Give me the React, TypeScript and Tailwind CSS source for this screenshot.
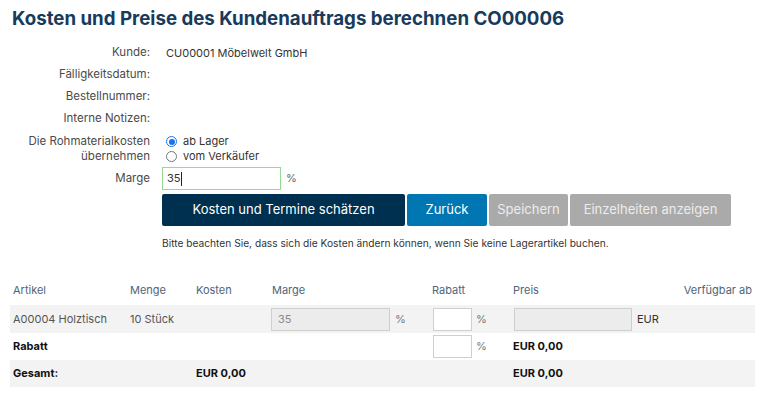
import React from "react";

const font = { fontFamily: "Inter, 'Liberation Sans', sans-serif" };

const FormRow = ({ label, children }: { label: React.ReactNode; children?: React.ReactNode }) => (
  <div className="grid grid-cols-[138px_1fr] gap-x-[16px] h-[22px] items-center">
    <span className="text-right text-[11.5px] text-[#4a4a4a]">{label}</span>
    <span className="text-[11px] text-[#333]">{children}</span>
  </div>
);

const Radio = ({ checked, label }: { checked?: boolean; label: string }) => (
  <div className="flex items-center gap-[6px] h-[15px]">
    {checked ? (
      <span className="flex size-[11px] items-center justify-center rounded-full border border-[#1a73e8] bg-white">
        <span className="size-[6px] rounded-full bg-[#1a73e8]" />
      </span>
    ) : (
      <span className="size-[11px] rounded-full border border-[#777] bg-white" />
    )}
    <span className="text-[11px] text-[#333]">{label}</span>
  </div>
);

export default function App() {
  return (
    <div className="w-[764px] h-[400px] bg-white px-[12px] overflow-hidden" style={font}>
      <h1 className="pt-[4px] text-[18.7px] leading-[30px] font-bold text-[#173b5c]">
        Kosten und Preise des Kundenauftrags berechnen CO00006
      </h1>

      <div className="mt-[8px]">
        <FormRow label="Kunde:">CU00001 Möbelwelt GmbH</FormRow>
        <FormRow label="Fälligkeitsdatum:" />
        <FormRow label="Bestellnummer:" />
        <FormRow label="Interne Notizen:" />

        <div className="mt-[4px] grid grid-cols-[138px_1fr] gap-x-[16px]">
          <span className="text-right text-[11.5px] leading-[15px] text-[#4a4a4a]">
            Die Rohmaterialkosten
            <br />
            übernehmen
          </span>
          <div className="flex flex-col">
            <Radio checked label="ab Lager" />
            <Radio label="vom Verkäufer" />
          </div>
        </div>

        <div className="mt-[3px] grid grid-cols-[138px_1fr] gap-x-[12px] items-center">
          <span className="text-right text-[11.5px] text-[#4a4a4a]">Marge</span>
          <div className="flex items-center gap-[5px]">
            <div className="flex h-[23px] w-[119px] items-center border border-[#93db93] px-[4px] text-[11px] text-[#333]">
              35<span className="ml-[1px] h-[14px] w-px bg-[#222]" />
            </div>
            <span className="text-[11px] text-[#666]">%</span>
          </div>
        </div>

        <div className="mt-[4px] ml-[150px] flex gap-[2px]">
          <button className="h-[32px] w-[243px] rounded-[2px] bg-[#00304f] text-[13px] text-white">
            Kosten und Termine schätzen
          </button>
          <button className="h-[32px] w-[80px] rounded-[2px] bg-[#0077b3] text-[13px] text-white">
            Zurück
          </button>
          <button className="h-[32px] w-[79px] rounded-[2px] bg-[#aaaaaa] text-[13px] text-[#ececec]">
            Speichern
          </button>
          <button className="h-[32px] w-[161px] rounded-[2px] bg-[#aaaaaa] text-[13px] text-[#ececec]">
            Einzelheiten anzeigen
          </button>
        </div>

        <p className="ml-[150px] mt-[8px] text-[10.2px] leading-[18px] text-[#333]">
          Bitte beachten Sie, dass sich die Kosten ändern können, wenn Sie keine Lagerartikel buchen.
        </p>
      </div>

      <div className="mt-[23px] -ml-[2px] w-[745px] text-[11px]">
        <div className="grid grid-cols-[117px_66px_76px_160px_81px_170px_1fr] h-[30px] items-center text-[#4f6578]">
          <span className="pl-[3px]">Artikel</span>
          <span className="pl-[3px]">Menge</span>
          <span className="pl-[3px]">Kosten</span>
          <span className="pl-[3px]">Marge</span>
          <span className="pl-[3px]">Rabatt</span>
          <span className="pl-[3px]">Preis</span>
          <span className="text-right pr-[3px]">Verfügbar ab</span>
        </div>

        <div className="grid grid-cols-[117px_66px_76px_160px_81px_170px_1fr] h-[28px] items-center bg-[#f3f3f3] text-[#555]">
          <span className="pl-[3px]">A00004 Holztisch</span>
          <span className="pl-[3px]">10 Stück</span>
          <span />
          <div className="flex items-center gap-[5px] pl-[2px]">
            <div className="flex h-[23px] w-[119px] items-center border border-[#cfcfcf] bg-[#ececec] px-[6px] text-[#888]">
              35
            </div>
            <span className="text-[#777]">%</span>
          </div>
          <div className="flex items-center gap-[4px] pl-[4px]">
            <div className="h-[23px] w-[39px] border border-[#cfcfcf] bg-white" />
            <span className="text-[#777]">%</span>
          </div>
          <div className="flex items-center gap-[5px] pl-[4px]">
            <div className="h-[23px] w-[118px] border border-[#cfcfcf] bg-[#ececec]" />
            <span className="text-[#333]">EUR</span>
          </div>
          <span />
        </div>

        <div className="grid grid-cols-[117px_66px_76px_160px_81px_170px_1fr] h-[27px] items-center font-bold text-[#111]">
          <span className="pl-[3px]">Rabatt</span>
          <span />
          <span />
          <span />
          <div className="flex items-center gap-[4px] pl-[4px] font-normal">
            <div className="h-[23px] w-[39px] border border-[#cfcfcf] bg-white" />
            <span className="text-[#777]">%</span>
          </div>
          <span className="pl-[3px]">EUR 0,00</span>
          <span />
        </div>

        <div className="grid grid-cols-[117px_66px_76px_160px_81px_170px_1fr] h-[27px] items-center bg-[#f3f3f3] font-bold text-[#111]">
          <span className="pl-[3px]">Gesamt:</span>
          <span />
          <span className="pl-[3px]">EUR 0,00</span>
          <span />
          <span />
          <span className="pl-[3px]">EUR 0,00</span>
          <span />
        </div>
      </div>
    </div>
  );
}
